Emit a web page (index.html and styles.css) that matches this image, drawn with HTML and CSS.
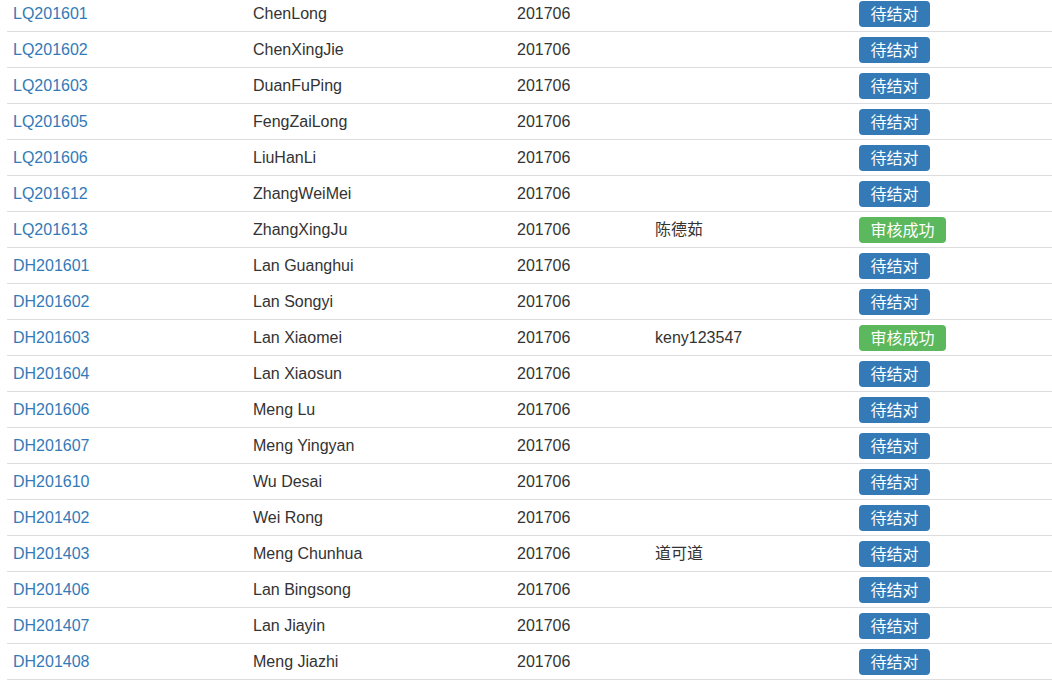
FILE: index.html
```html
<!DOCTYPE html>
<html lang="zh">
<head>
<meta charset="utf-8">
<title>结对列表</title>
<link rel="stylesheet" href="styles.css">
</head>
<body>
<div class="wrap">
<table class="list">
<colgroup>
<col class="c1"><col class="c2"><col class="c3"><col class="c4"><col class="c5">
</colgroup>
<tbody>
<tr><td><a href="#">LQ201601</a></td><td>ChenLong</td><td>201706</td><td></td><td><span class="btn primary">待结对</span></td></tr>
<tr><td><a href="#">LQ201602</a></td><td>ChenXingJie</td><td>201706</td><td></td><td><span class="btn primary">待结对</span></td></tr>
<tr><td><a href="#">LQ201603</a></td><td>DuanFuPing</td><td>201706</td><td></td><td><span class="btn primary">待结对</span></td></tr>
<tr><td><a href="#">LQ201605</a></td><td>FengZaiLong</td><td>201706</td><td></td><td><span class="btn primary">待结对</span></td></tr>
<tr><td><a href="#">LQ201606</a></td><td>LiuHanLi</td><td>201706</td><td></td><td><span class="btn primary">待结对</span></td></tr>
<tr><td><a href="#">LQ201612</a></td><td>ZhangWeiMei</td><td>201706</td><td></td><td><span class="btn primary">待结对</span></td></tr>
<tr><td><a href="#">LQ201613</a></td><td>ZhangXingJu</td><td>201706</td><td>陈德茹</td><td><span class="btn success">审核成功</span></td></tr>
<tr><td><a href="#">DH201601</a></td><td>Lan Guanghui</td><td>201706</td><td></td><td><span class="btn primary">待结对</span></td></tr>
<tr><td><a href="#">DH201602</a></td><td>Lan Songyi</td><td>201706</td><td></td><td><span class="btn primary">待结对</span></td></tr>
<tr><td><a href="#">DH201603</a></td><td>Lan Xiaomei</td><td>201706</td><td>keny123547</td><td><span class="btn success">审核成功</span></td></tr>
<tr><td><a href="#">DH201604</a></td><td>Lan Xiaosun</td><td>201706</td><td></td><td><span class="btn primary">待结对</span></td></tr>
<tr><td><a href="#">DH201606</a></td><td>Meng Lu</td><td>201706</td><td></td><td><span class="btn primary">待结对</span></td></tr>
<tr><td><a href="#">DH201607</a></td><td>Meng Yingyan</td><td>201706</td><td></td><td><span class="btn primary">待结对</span></td></tr>
<tr><td><a href="#">DH201610</a></td><td>Wu Desai</td><td>201706</td><td></td><td><span class="btn primary">待结对</span></td></tr>
<tr><td><a href="#">DH201402</a></td><td>Wei Rong</td><td>201706</td><td></td><td><span class="btn primary">待结对</span></td></tr>
<tr><td><a href="#">DH201403</a></td><td>Meng Chunhua</td><td>201706</td><td>道可道</td><td><span class="btn primary">待结对</span></td></tr>
<tr><td><a href="#">DH201406</a></td><td>Lan Bingsong</td><td>201706</td><td></td><td><span class="btn primary">待结对</span></td></tr>
<tr><td><a href="#">DH201407</a></td><td>Lan Jiayin</td><td>201706</td><td></td><td><span class="btn primary">待结对</span></td></tr>
<tr><td><a href="#">DH201408</a></td><td>Meng Jiazhi</td><td>201706</td><td></td><td><span class="btn primary">待结对</span></td></tr>
</tbody>
</table>
</div>
</body>
</html>
```
FILE: styles.css
```css
html, body {
  margin: 0;
  padding: 0;
  background: #fff;
  overflow: hidden;
}
body {
  font-family: "Liberation Sans", Arial, "Noto Sans CJK SC", sans-serif;
  font-size: 16px;
  color: #333;
}
.wrap {
  padding-left: 7px;
}
.list {
  width: 1045px;
  margin-top: -5px;
  border-collapse: collapse;
  table-layout: fixed;
}
.c1 { width: 240px; }
.c2 { width: 264px; }
.c3 { width: 138px; }
.c4 { width: 204px; }
.c5 { width: 199px; }
.list td {
  height: 36px;
  padding: 0 6px;
  border-top: 1px solid #ddd;
  vertical-align: middle;
  line-height: 22px;
  white-space: nowrap;
  box-sizing: border-box;
}
.list tr:last-child td {
  border-bottom: 1px solid #ddd;
}
.list a {
  color: #337ab7;
  text-decoration: none;
}
.btn {
  display: inline-block;
  box-sizing: border-box;
  height: 26px;
  line-height: 24px;
  padding: 0 11.5px 2px;
  border-radius: 4px;
  color: #fff;
  font-family: "Noto Sans CJK SC", sans-serif;
  font-size: 16px;
  vertical-align: middle;
}
.primary {
  background: #337ab7;
}
.success {
  background: #5cb85c;
}
```
